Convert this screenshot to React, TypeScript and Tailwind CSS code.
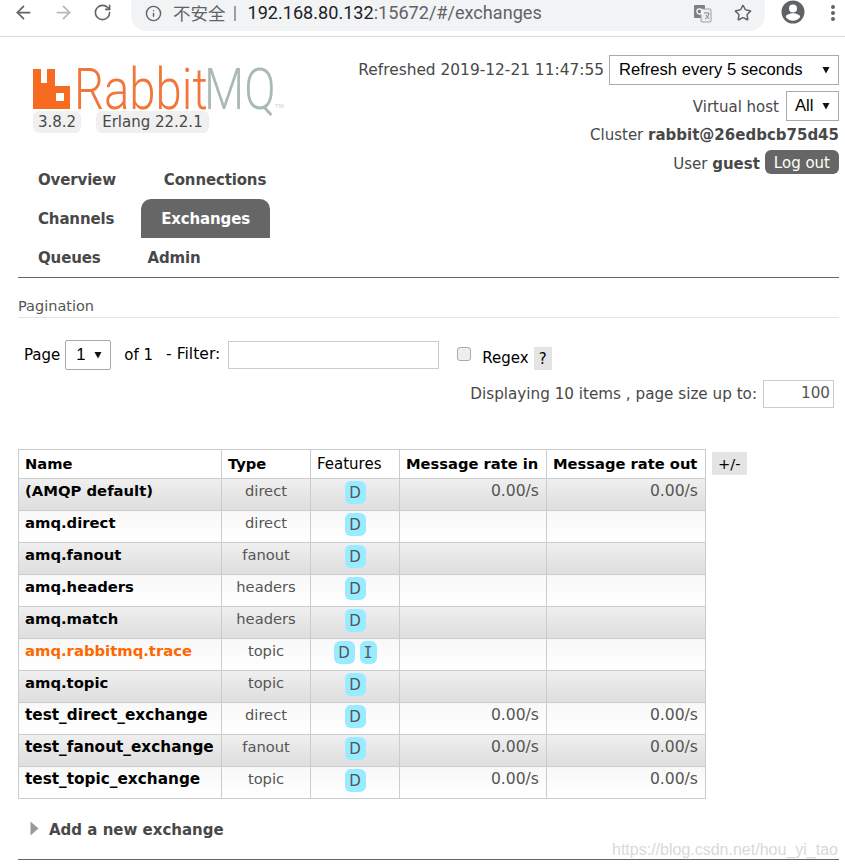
import { ArrowLeft, ArrowRight, Info, RotateCw, Star } from "lucide-react";

const rows = [
  { name: "(AMQP default)", type: "direct", rateIn: "0.00/s", rateOut: "0.00/s" },
  { name: "amq.direct", type: "direct" },
  { name: "amq.fanout", type: "fanout" },
  { name: "amq.headers", type: "headers" },
  { name: "amq.match", type: "headers" },
  { name: "amq.rabbitmq.trace", type: "topic", internal: true },
  { name: "amq.topic", type: "topic" },
  { name: "test_direct_exchange", type: "direct", rateIn: "0.00/s", rateOut: "0.00/s" },
  { name: "test_fanout_exchange", type: "fanout", rateIn: "0.00/s", rateOut: "0.00/s" },
  { name: "test_topic_exchange", type: "topic", rateIn: "0.00/s", rateOut: "0.00/s" },
];

function Caret() {
  return (
    <svg width="8" height="8" viewBox="0 0 8 8" className="shrink-0">
      <polygon points="0.5,1 7.5,1 4,7.5" fill="#111" />
    </svg>
  );
}

function Tag({ label }: { label: string }) {
  return (
    <span
      className={
        label === "I"
          ? "inline-block w-[17px] h-[23px] leading-[25px] rounded-[6px] bg-[#99ebff] text-center text-[15px] text-[#555] font-['DejaVu_Sans_Mono',monospace]"
          : "inline-block w-[21px] h-[23px] leading-[25px] rounded-[6px] bg-[#99ebff] text-center text-[15px] text-[#555]"
      }
    >
      {label}
    </span>
  );
}

function BrowserBar() {
  return (
    <div className="h-[37px] border-b border-[#dcdcdc] flex items-start">
      <div className="flex items-center pl-[13px] pt-[2px] gap-[19px] w-[131px] text-[#5f6368]">
        <ArrowLeft size={21} strokeWidth={2} />
        <ArrowRight size={21} strokeWidth={2} className="text-[#b6b8ba]" />
        <RotateCw size={19} strokeWidth={2} />
      </div>
      <div className="w-[634px] h-[31px] bg-[#f1f3f4] rounded-b-[16px] flex items-center pb-[5px] pl-[14px] pr-[13px] text-[#5f6368]">
        <Info size={17} strokeWidth={2} />
        <span className="ml-[11px] text-[17.5px] font-['Noto_Sans_CJK_SC',sans-serif]">不安全</span>
        <span className="ml-[8px] w-[2px] h-[15px] bg-[#9aa0a6]" />
        <span className="ml-[12px] text-[18.1px] text-[#202124] font-['Roboto',sans-serif]">
          192.168.80.132<span className="text-[#5f6368]">:15672/#/exchanges</span>
        </span>
        <svg width="20" height="20" viewBox="0 0 20 20" className="ml-auto mr-[21px]">
          <rect x="1" y="2" width="11" height="13" rx="1" fill="#7d8186" />
          <rect x="8" y="6" width="10" height="13" rx="1" fill="#eceeef" stroke="#9aa0a6" />
          <circle cx="6.5" cy="8.5" r="2.6" fill="none" stroke="#fff" strokeWidth="1.2" />
          <path d="M11 10h5M13 12l3 4M16 10c-.5 3-2 5-4 6" fill="none" stroke="#7d8186" />
        </svg>
        <Star size={18} strokeWidth={2} />
      </div>
      <svg width="24" height="24" viewBox="0 0 24 24" className="ml-[16px] text-[#5f6368]" fill="currentColor">
        <path d="M12 0.5a11.5 11.5 0 1 0 0 23 11.5 11.5 0 0 0 0-23zm0 4a4 4 0 1 1 0 8 4 4 0 0 1 0-8zm0 16.2c-3 0-5.6-1.5-7.2-3.8 0-2.400 4.800-3.700 7.200-3.700s7.200 1.300 7.200 3.700c-1.600 2.300-4.200 3.800-7.200 3.800z" />
      </svg>
      <div className="ml-[26px] mt-[5px] flex flex-col gap-[2px]">
        <span className="w-[4px] h-[4px] rounded-full bg-[#5f6368]" />
        <span className="w-[4px] h-[4px] rounded-full bg-[#5f6368]" />
        <span className="w-[4px] h-[4px] rounded-full bg-[#5f6368]" />
      </div>
    </div>
  );
}

function Logo() {
  return (
    <div className="pt-[32px] pl-[15px]">
      <div className="flex items-end h-[40px]">
        <svg width="37" height="40" viewBox="0 0 37 40" className="shrink-0">
          <path d="M0 0h8v14h6V0h8v17h15v23H0z" fill="#f76b21" />
          <rect x="23" y="24" width="8" height="8" fill="#fff" />
        </svg>
        <span className="ml-[4px] w-[130px] text-[58px] leading-[40px] font-light text-[#f2753a] font-['Roboto',sans-serif] inline-block origin-left scale-x-[0.815] whitespace-nowrap">
          Rabbit
        </span>
        <span className="w-[71px] text-[58px] leading-[40px] font-light text-[#a9bab3] font-['Roboto',sans-serif] inline-block origin-left scale-x-[0.8] whitespace-nowrap">
          MQ
        </span>
        <span className="text-[6px] leading-[6px] text-[#c4cfca] font-['Liberation_Sans',sans-serif]">TM</span>
      </div>
      <div className="flex gap-[15px] mt-[2px] text-[15px] leading-[22px]">
        <span className="px-[5px] rounded-[6px] bg-[#f0f0f0]">3.8.2</span>
        <span className="px-[6px] rounded-[6px] bg-[#f0f0f0]">Erlang 22.2.1</span>
      </div>
    </div>
  );
}

function Header() {
  return (
    <div className="flex justify-between pl-[18px] pr-[6px] h-[123px]">
      <Logo />
      <div className="pt-[18px] flex flex-col items-end text-[15px]">
        <div className="flex items-center gap-[5px]">
          <span className="text-[15.4px] pt-[2px]">Refreshed 2019-12-21 11:47:55</span>
          <div className="w-[230px] h-[30px] border border-[#aaa] flex items-center justify-between pl-[9px] pr-[8px] text-[16.6px] text-black font-['Liberation_Sans',sans-serif]">
            Refresh every 5 seconds
            <Caret />
          </div>
        </div>
        <div className="flex items-center gap-[7px] mt-[6px]">
          <span className="pt-[2px]">Virtual host</span>
          <div className="w-[53px] h-[30px] border border-[#aaa] flex items-center justify-between pl-[8px] pr-[8px] text-[16.6px] text-black font-['Liberation_Sans',sans-serif]">
            All
            <Caret />
          </div>
        </div>
        <div className="mt-[3px] leading-[22px]">
          Cluster <b>rabbit@26edbcb75d45</b>
        </div>
        <div className="mt-[3px] flex items-center gap-[5px]">
          <span className="pt-[4px]">
            User <b>guest</b>
          </span>
          <span className="h-[24px] leading-[26px] px-[9px] rounded-[6px] bg-[#666] text-white">Log out</span>
        </div>
      </div>
    </div>
  );
}

function NavItem({ label, active }: { label: string; active?: boolean }) {
  return (
    <span
      className={
        active
          ? "w-[129px] h-[39px] leading-[41px] pl-[20px] rounded-t-[10px] bg-[#666] text-white font-bold text-[15px] tracking-[-0.15px]"
          : "h-[39px] leading-[41px] px-[20px] font-bold text-[15px] tracking-[-0.15px]"
      }
    >
      {label}
    </span>
  );
}

function Nav() {
  return (
    <div className="ml-[18px] mr-[6px] border-b border-[#666] h-[118px]">
      <div className="flex gap-[8px]">
        <NavItem label="Overview" />
        <NavItem label="Connections" />
      </div>
      <div className="flex gap-[7px]">
        <NavItem label="Channels" />
        <NavItem label="Exchanges" active />
      </div>
      <div className="flex gap-[7px]">
        <NavItem label="Queues" />
        <NavItem label="Admin" />
      </div>
    </div>
  );
}

function Pagination() {
  return (
    <div className="ml-[18px] mr-[6px]">
      <div className="mt-[18px] h-[22px] leading-[20px] text-[14.5px] border-b border-[#e4e4e4] text-[#555]">Pagination</div>
      <div className="flex items-center h-[30px] mt-[22px] pl-[6px] text-[15px] text-black">
        <span className="pt-[1px]">Page</span>
        <div className="ml-[5px] w-[46px] h-[30px] border border-[#aaa] rounded-[2px] flex items-center justify-between pl-[10px] pr-[8px] text-[16.6px] font-['Liberation_Sans',sans-serif]">
          1
          <Caret />
        </div>
        <span className="ml-[13px] pt-[1px]">of 1</span>
        <span className="ml-[13px] mt-[-1px] text-[15.6px]">- Filter:</span>
        <div className="ml-[8px] w-[211px] h-[28px] border border-[#ccc]" />
        <div className="ml-[18px] w-[14px] h-[14px] mt-[-3px] rounded-[3px] border border-[#aaa] bg-[#eee]" />
        <span className="ml-[11px] mt-[6px]">Regex</span>
        <span className="ml-[5px] mt-[6px] w-[18px] h-[23px] leading-[24px] text-center bg-[#e4e4e4]">?</span>
      </div>
      <div className="flex items-center justify-end h-[28px] mt-[10px] pr-[5px] text-[15.2px]">
        <span>Displaying 10 items , page size up to:</span>
        <div className="ml-[6px] w-[71px] h-[28px] border border-[#ccc] text-right pr-[3px] leading-[24px] text-[#555]">100</div>
      </div>
    </div>
  );
}

function ExchangeTable() {
  return (
    <div className="ml-[18px] mr-[6px] mt-[41px] flex items-start text-[14.7px]">
      <table className="border-collapse table-fixed w-[687px] shrink-0">
        <colgroup>
          <col className="w-[203px]" />
          <col className="w-[89px]" />
          <col className="w-[89px]" />
          <col className="w-[147px]" />
          <col className="w-[159px]" />
        </colgroup>
        <thead>
          <tr className="h-[29px] text-black">
            <th className="border border-[#ccc] text-left pl-[6px] pt-[1px]">Name</th>
            <th className="border border-[#ccc] text-left pl-[6px] pt-[1px]">Type</th>
            <th className="border border-[#ccc] text-left pl-[6px] pt-[1px] font-normal text-[15px]">Features</th>
            <th className="border border-[#ccc] text-left pl-[6px] pt-[1px] whitespace-nowrap">Message rate in</th>
            <th className="border border-[#ccc] text-left pl-[6px] pt-[1px] whitespace-nowrap">Message rate out</th>
          </tr>
        </thead>
        <tbody>
          {rows.map((row, i) => (
            <tr
              key={row.name}
              className={
                i % 2 === 0
                  ? "h-[32px] bg-linear-to-b from-[#efefef] to-[#dedede]"
                  : "h-[32px] bg-linear-to-b from-[#f8f8f8] to-[#ffffff]"
              }
            >
              <td className={row.internal ? "border border-[#ccc] align-top pl-[6px] pt-[1px] font-bold text-[14.8px] text-[#f60] whitespace-nowrap" : row.name.startsWith("test_") ? "border border-[#ccc] align-top pl-[6px] pt-[1px] font-bold text-[15.3px] text-black whitespace-nowrap" : "border border-[#ccc] align-top pl-[6px] pt-[1px] font-bold text-[14.8px] text-black whitespace-nowrap"}>
                {row.name}
              </td>
              <td className="border border-[#ccc] align-top text-center pt-[1px] text-[#555]">{row.type}</td>
              <td className="border border-[#ccc] align-top text-center pt-[2px]">
                <span className="inline-flex gap-[5px] justify-center">
                  <Tag label="D" />
                  {row.internal && <Tag label="I" />}
                </span>
              </td>
              <td className="border border-[#ccc] align-top text-right pr-[7px] pt-[1px] text-[15.6px] text-[#555]">{row.rateIn}</td>
              <td className="border border-[#ccc] align-top text-right pr-[7px] pt-[1px] text-[15.6px] text-[#555]">{row.rateOut}</td>
            </tr>
          ))}
        </tbody>
      </table>
      <span className="ml-[6px] mt-[3px] h-[23px] leading-[23px] px-[6px] bg-[#e4e4e4] text-black">+/-</span>
    </div>
  );
}

export default function App() {
  return (
    <div className="relative w-[845px] h-[867px] overflow-hidden bg-white text-[#484848] font-['DejaVu_Sans',sans-serif]">
      <BrowserBar />
      <Header />
      <Nav />
      <Pagination />
      <ExchangeTable />
      <div className="ml-[18px] mr-[6px] mt-[20px] h-[41px] border-b border-[#666] flex items-start pl-[12px] text-[15px] font-bold">
        <svg width="9" height="15" viewBox="0 0 9 15" className="mt-[2px]">
          <polygon points="0.500,0.500 8.500,7.500 0.500,14.500" fill="#999" />
        </svg>
        <span className="ml-[10px]">Add a new exchange</span>
      </div>
      <span className="absolute left-[612px] top-[838px] text-[16px] text-[#d9d9d9] font-['Liberation_Sans',sans-serif]">
        https://blog.csdn.net/hou_yi_tao
      </span>
    </div>
  );
}
